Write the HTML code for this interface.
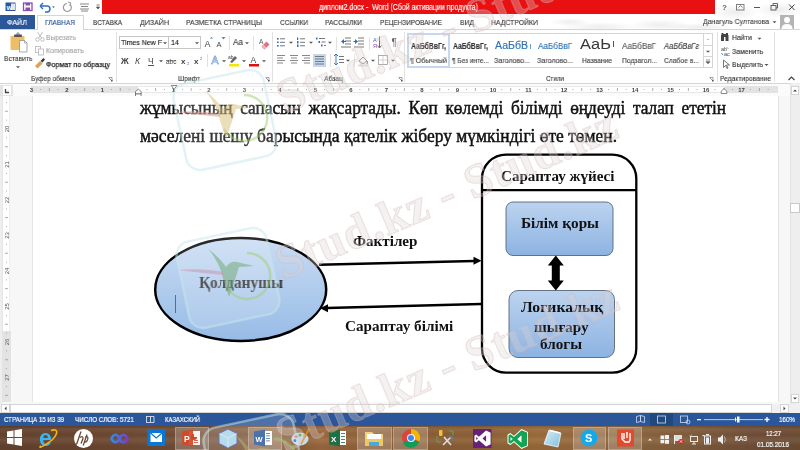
<!DOCTYPE html>
<html><head><meta charset="utf-8">
<style>
*{margin:0;padding:0;box-sizing:border-box}
html,body{width:800px;height:450px;overflow:hidden;background:#fff;font-family:"Liberation Sans",sans-serif;color:#444;position:relative}
.a{position:absolute;white-space:nowrap;will-change:transform}
.sep{position:absolute;width:1px;background:#E1E1E1}
.serif{font-family:"Liberation Serif",serif}
svg{position:absolute;overflow:visible}
</style></head><body>
<div class="a" style="left:102px;top:0;width:613px;height:14px;background:#E81010"></div>
<svg style="left:0;top:0" width="102" height="14">
<rect x="5.5" y="2.5" width="10" height="8.5" fill="#2B579A"/><rect x="11" y="3.5" width="4" height="6.5" fill="#fff" opacity=".85"/>
<text x="6.5" y="9.5" font-size="6" font-family="Liberation Sans" font-weight="bold" fill="#fff">W</text>
<rect x="23.5" y="3" width="8.5" height="7.5" fill="none" stroke="#8A4DAF" stroke-width="1.3"/><rect x="25.5" y="3" width="4.5" height="2.5" fill="#8A4DAF"/><rect x="25.5" y="7.5" width="4.5" height="3" fill="#8A4DAF"/>
<path d="M41 6 h6 a3 3 0 0 1 0 6 h-2" fill="none" stroke="#2B6CC4" stroke-width="1.4"/><path d="M40 6 l3 -3 M40 6 l3 3" stroke="#2B6CC4" stroke-width="1.4" fill="none"/>
<path d="M52 6.5 l1.5 1.5 l1.5 -1.5z" fill="#555"/>
<path d="M70 4.5 a4 4 0 1 1 -3 -1" fill="none" stroke="#999" stroke-width="1.2"/><path d="M68 2 l3 1 l-1.5 2.5" fill="none" stroke="#999" stroke-width="1"/>
<path d="M80 4h9M81 6.5h7M80 9h9M81 11h7" stroke="#777" stroke-width="0.9"/>
<path d="M96.5 5h3M96.5 7l1.5 2l1.5 -2z" stroke="#555" stroke-width="0.8" fill="#555"/>
</svg>
<svg style="left:714px;top:0" width="86" height="14">
<text x="8" y="10" font-size="8" font-family="Liberation Sans" font-weight="bold" fill="#666">?</text>
<rect x="22.5" y="4.5" width="7.5" height="5.5" fill="none" stroke="#777" stroke-width="0.9"/><path d="M24.5 7.5l2 -2l2 2" fill="none" stroke="#777" stroke-width="0.9"/>
<path d="M40 7.5h6" stroke="#555" stroke-width="1"/>
<rect x="57" y="5.5" width="5" height="4.5" fill="none" stroke="#555" stroke-width="0.9"/><path d="M59 5.5v-2h4.5v4.5h-1.5" fill="none" stroke="#555" stroke-width="0.9"/>
<path d="M75 4.5l5.5 5.5M80.5 4.5l-5.5 5.5" stroke="#444" stroke-width="1"/>
</svg>
<svg style="left:0;top:0" width="800" height="30"><defs><radialGradient id="cl"><stop offset="0" stop-color="#000" stop-opacity="0.07"/><stop offset="1" stop-color="#000" stop-opacity="0"/></radialGradient></defs><ellipse cx="600" cy="27" rx="40" ry="5" fill="url(#cl)"/><ellipse cx="660" cy="25" rx="30" ry="6" fill="url(#cl)"/><ellipse cx="700" cy="27" rx="35" ry="4" fill="url(#cl)"/><ellipse cx="735" cy="12" rx="25" ry="8" fill="url(#cl)"/><ellipse cx="780" cy="10" rx="25" ry="8" fill="url(#cl)"/><ellipse cx="570" cy="22" rx="20" ry="4" fill="url(#cl)"/></svg>
<div class="a" style="left:0;top:15px;width:35px;height:14px;background:#2B579A"></div>
<div class="a" style="left:37px;top:15px;width:47px;height:15px;border:1px solid #D5D5D5;border-bottom:none;background:#fff"></div>
<div class="a" style="left:0;top:29px;width:37px;height:1px;background:#D5D5D5"></div>
<div class="a" style="left:84px;top:29px;width:716px;height:1px;background:#D5D5D5"></div>
<svg style="left:770px;top:15px" width="30" height="15"><path d="M2.5 6.2l2 2l2 -2z" fill="#555"/><rect x="10" y="0" width="14" height="14" fill="#B4B4B4"/><circle cx="17" cy="5" r="3" fill="#fff"/><path d="M11.5 14 q0 -5 5.5 -5 q5.5 0 5.5 5z" fill="#fff"/></svg>
<div class="a" style="left:0;top:83px;width:800px;height:1px;background:#D5D5D5"></div>
<div class="sep" style="left:116px;top:32px;height:50px"></div>
<div class="sep" style="left:272px;top:32px;height:50px"></div>
<div class="sep" style="left:404px;top:32px;height:50px"></div>
<div class="sep" style="left:717px;top:32px;height:50px"></div>
<div class="sep" style="left:774px;top:32px;height:50px"></div>
<svg style="left:108px;top:77px" width="5" height="5"><path d="M0.5 0.5h3.5v3.5" fill="none" stroke="#888" stroke-width="0.8"/><path d="M1 1l3 3" stroke="#888" stroke-width="0.8"/><rect x="3" y="3" width="1.5" height="1.5" fill="#555"/></svg>
<svg style="left:265px;top:77px" width="5" height="5"><path d="M0.5 0.5h3.5v3.5" fill="none" stroke="#888" stroke-width="0.8"/><path d="M1 1l3 3" stroke="#888" stroke-width="0.8"/><rect x="3" y="3" width="1.5" height="1.5" fill="#555"/></svg>
<svg style="left:398px;top:77px" width="5" height="5"><path d="M0.5 0.5h3.5v3.5" fill="none" stroke="#888" stroke-width="0.8"/><path d="M1 1l3 3" stroke="#888" stroke-width="0.8"/><rect x="3" y="3" width="1.5" height="1.5" fill="#555"/></svg>
<svg style="left:709px;top:77px" width="5" height="5"><path d="M0.5 0.5h3.5v3.5" fill="none" stroke="#888" stroke-width="0.8"/><path d="M1 1l3 3" stroke="#888" stroke-width="0.8"/><rect x="3" y="3" width="1.5" height="1.5" fill="#555"/></svg>
<svg style="left:787px;top:75px" width="10" height="7"><path d="M1.5 5l3 -3l3 3" fill="none" stroke="#444" stroke-width="1.2"/></svg>
<svg style="left:0;top:30px" width="116" height="52">
<rect x="10.5" y="6" width="14" height="14" rx="0.8" fill="#EDBE68"/><rect x="14" y="4.5" width="8" height="2.5" rx="0.8" fill="#555"/><circle cx="18" cy="4" r="1.2" fill="none" stroke="#555" stroke-width="0.7"/>
<path d="M19.5 10.5h5l2.5 2.5v9h-7.5z" fill="#fff" stroke="#888" stroke-width="0.7"/><path d="M24.5 10.5v2.5h2.5" fill="none" stroke="#888" stroke-width="0.6"/>
<path d="M16 36.2l2 2l2 -2z" fill="#555"/>
<circle cx="37.5" cy="9.5" r="1.8" fill="none" stroke="#B0B0B0" stroke-width="0.8"/><circle cx="42.5" cy="9.5" r="1.8" fill="none" stroke="#B0B0B0" stroke-width="0.8"/><path d="M38.5 8l4-6M41.5 8l-4 -6" stroke="#B0B0B0" stroke-width="0.8"/>
<rect x="35.5" y="16.5" width="5" height="6" fill="#fff" stroke="#B5B5B5" stroke-width="0.8"/><rect x="38.5" y="19" width="5" height="6" fill="#fff" stroke="#B5B5B5" stroke-width="0.8"/>
<path d="M35 36l5 -5l2.5 2.5l-5 5z" fill="#E0A050"/><path d="M40.5 31l3 -3l1.5 1.5l-2.5 3z" fill="#333"/>
</svg>
<div class="a" style="left:119px;top:36px;width:50px;height:13px;border:1px solid #C6C6C6;background:#fff"></div>
<div class="a" style="left:168px;top:36px;width:33px;height:13px;border:1px solid #C6C6C6;background:#fff"></div>
<svg style="left:117px;top:30px" width="155" height="52">
<path d="M46 12.2l2 2l2 -2z" fill="#555"/><path d="M78 12.2l2 2l2 -2z" fill="#555"/>
<text x="87.5" y="17" font-size="9" font-family="Liberation Sans" fill="#444">A</text><path d="M93 8.5l1.5 -1.5l1.5 1.5z" fill="#2B6CC4"/>
<text x="99.5" y="17" font-size="7.5" font-family="Liberation Sans" fill="#444">A</text><path d="M104.5 7.2l2 2l2 -2z" fill="#2B6CC4"/>
<rect x="112" y="6" width="1" height="14" fill="#E1E1E1"/>
<path d="M128 12.2l2 2l2 -2z" fill="#555"/>
<rect x="136" y="6" width="1" height="14" fill="#E1E1E1"/>
<text x="142" y="13.5" font-size="6.5" font-family="Liberation Sans" fill="#555">A</text><path d="M144.5 16.5l5 -5l3 3l-5 5z" fill="#E07080"/><path d="M144.5 16.5l2 -2l3 3l-2 2z" fill="#F0B0B8"/>
<text x="4" y="34" font-size="8.5" font-family="Liberation Sans" font-weight="bold" fill="#444">Ж</text>
<text x="18" y="34" font-size="8.5" font-family="Liberation Sans" font-style="italic" fill="#444">К</text>
<text x="31" y="33.5" font-size="8.5" font-family="Liberation Sans" fill="#444">Ч</text><rect x="31" y="35" width="6" height="0.9" fill="#444"/>
<path d="M42 30.2l2 2l2 -2z" fill="#555"/>
<text x="49" y="33.5" font-size="6.5" font-family="Liberation Sans" fill="#444">abc</text><rect x="49" y="30.5" width="10" height="0.6" fill="#444"/>
<text x="64" y="34" font-size="8" font-family="Liberation Sans" font-weight="bold" fill="#444">x</text><text x="70" y="35" font-size="4" font-family="Liberation Sans" fill="#2B6CC4">2</text>
<text x="77" y="34" font-size="8" font-family="Liberation Sans" font-weight="bold" fill="#444">x</text><text x="83" y="30" font-size="4" font-family="Liberation Sans" fill="#2B6CC4">2</text>
<rect x="90" y="24" width="1" height="13" fill="#E1E1E1"/>
<text x="94.5" y="34" font-size="10.5" font-family="Liberation Sans" fill="#fff" stroke="#4A86D0" stroke-width="0.55">A</text>
<path d="M105 30.2l2 2l2 -2z" fill="#555"/>
<path d="M113 32l5 -6l2 2l-5 5z" fill="#666"/><text x="111" y="29" font-size="5" font-family="Liberation Sans" fill="#444">ab</text><rect x="112" y="34" width="10" height="2.5" fill="#F5E800"/>
<path d="M125 30.2l2 2l2 -2z" fill="#555"/>
<text x="133.5" y="32.5" font-size="8.5" font-family="Liberation Sans" fill="#444">A</text><rect x="132" y="34" width="10" height="2.5" fill="#E01010"/>
<path d="M145 30.2l2 2l2 -2z" fill="#555"/>
</svg>
<svg style="left:272px;top:30px" width="132" height="52">
<g fill="#2B6CC4"><rect x="5" y="8" width="1.6" height="1.6"/><rect x="5" y="11.5" width="1.6" height="1.6"/><rect x="5" y="15" width="1.6" height="1.6"/></g>
<g fill="#777"><rect x="8" y="8.3" width="5" height="1"/><rect x="8" y="11.8" width="5" height="1"/><rect x="8" y="15.3" width="5" height="1"/></g>
<path d="M17 11.7l2 2l2 -2z" fill="#555"/>
<g fill="#2B6CC4"><rect x="25" y="7.5" width="1.2" height="2.5"/><rect x="25" y="11" width="1.5" height="2.5"/><rect x="25" y="14.5" width="1.5" height="2.5"/></g>
<g fill="#777"><rect x="28" y="8.3" width="5" height="1"/><rect x="28" y="11.8" width="5" height="1"/><rect x="28" y="15.3" width="5" height="1"/></g>
<path d="M37 11.7l2 2l2 -2z" fill="#555"/>
<g fill="#2B6CC4"><rect x="44" y="7.5" width="1.5" height="2"/><rect x="46.5" y="11" width="1.5" height="2"/><rect x="49" y="14.5" width="1.5" height="2"/></g>
<g fill="#777"><rect x="47" y="8" width="6" height="1"/><rect x="49.5" y="11.5" width="4" height="1"/><rect x="52" y="15" width="2" height="1"/></g>
<path d="M56 11.7l2 2l2 -2z" fill="#555"/>
<rect x="64" y="7" width="1" height="13" fill="#E1E1E1"/>
<g fill="#777"><rect x="73" y="7.5" width="6" height="1"/><rect x="73" y="10.5" width="6" height="1"/><rect x="73" y="13.5" width="6" height="1"/><rect x="69" y="16.5" width="10" height="1"/></g><path d="M69 11.5l3 -2.5v5z" fill="#2B6CC4"/><rect x="71" y="11" width="3" height="1" fill="#2B6CC4"/>
<g fill="#777"><rect x="86" y="7.5" width="6" height="1"/><rect x="86" y="10.5" width="6" height="1"/><rect x="86" y="13.5" width="6" height="1"/><rect x="82" y="16.5" width="10" height="1"/></g><path d="M86 11.5l-3 -2.5v5z" fill="#2B6CC4"/><rect x="81.5" y="11" width="3" height="1" fill="#2B6CC4"/>
<rect x="97" y="7" width="1" height="13" fill="#E1E1E1"/>
<text x="101" y="12" font-size="5.5" font-family="Liberation Sans" fill="#2B6CC4">A</text><text x="101" y="17.5" font-size="5.5" font-family="Liberation Sans" fill="#8A3FB0">Я</text><path d="M107.5 6.5v11M105.5 15.5l2 2.5l2 -2.5" fill="none" stroke="#555" stroke-width="0.9"/>
<text x="119.5" y="16" font-size="10" font-family="Liberation Sans" fill="#666">¶</text>
<g fill="#888"><rect x="5" y="25" width="8" height="1"/><rect x="5" y="27.5" width="6" height="1"/><rect x="5" y="30" width="8" height="1"/><rect x="5" y="32.5" width="6" height="1"/></g>
<g fill="#888"><rect x="18" y="25" width="8" height="1"/><rect x="19" y="27.5" width="6" height="1"/><rect x="18" y="30" width="8" height="1"/><rect x="19" y="32.5" width="6" height="1"/></g>
<g fill="#888"><rect x="30" y="25" width="8" height="1"/><rect x="32" y="27.5" width="6" height="1"/><rect x="30" y="30" width="8" height="1"/><rect x="32" y="32.5" width="6" height="1"/></g>
<rect x="41" y="24" width="13" height="13" fill="#C5D7EE"/>
<g fill="#777"><rect x="43" y="26" width="9" height="1"/><rect x="43" y="28.5" width="9" height="1"/><rect x="43" y="31" width="9" height="1"/><rect x="43" y="33.5" width="9" height="1"/></g>
<rect x="58" y="24" width="1" height="13" fill="#E1E1E1"/>
<path d="M64 24v11M62 26l2 -2l2 2M62 33l2 2l2 -2" fill="none" stroke="#2B6CC4" stroke-width="0.9"/><g fill="#777"><rect x="67" y="26" width="5" height="1"/><rect x="67" y="29" width="5" height="1"/><rect x="67" y="32" width="5" height="1"/></g>
<path d="M74 29.7l2 2l2 -2z" fill="#555"/>
<rect x="82" y="24" width="1" height="13" fill="#E1E1E1"/>
<path d="M87 31l4 -4l4 4l-4 3z" fill="none" stroke="#777" stroke-width="0.9"/><path d="M95 31q1 2 0 3" stroke="#2B6CC4" fill="none"/><rect x="86" y="34.5" width="10" height="2" fill="#ddd"/>
<path d="M99 29.7l2 2l2 -2z" fill="#555"/>
<rect x="106.5" y="25.5" width="9" height="9" fill="none" stroke="#999" stroke-width="0.8"/><path d="M111 25.5v9M106.5 30h9" stroke="#bbb" stroke-width="0.6"/>
<path d="M119 29.7l2 2l2 -2z" fill="#555"/>
</svg>
<div class="a" style="left:407px;top:33px;width:306px;height:35px;border:1px solid #D5D5D5;background:#fff"></div>
<div class="a" style="left:407px;top:33px;width:43px;height:35px;border:2px solid #C6D8EF"></div>
<div class="a" style="left:703px;top:33px;width:10px;height:35px;border-left:1px solid #D5D5D5"></div>
<div class="a" style="left:703px;top:45px;width:10px;height:1px;background:#D5D5D5"></div>
<div class="a" style="left:703px;top:56px;width:10px;height:1px;background:#D5D5D5"></div>
<svg style="left:703px;top:33px" width="10" height="35"><path d="M3.5 7l1.5 -1.5l1.5 1.5z" fill="#bbb"/><path d="M3 17.7l2 2l2 -2z" fill="#555"/><path d="M3 27h4M3 28.7l2 2l2 -2z" stroke="#555" stroke-width="0.6" fill="#555"/></svg>
<div class="a" style="left:529.5px;top:44px;width:1px;height:5px;background:#6a9fd0"></div>
<div class="a" style="left:613px;top:41px;width:1px;height:6px;background:#555"></div>
<svg style="left:717px;top:30px" width="57" height="52">
<g fill="#444"><rect x="4" y="5" width="3" height="6"/><rect x="8.5" y="5" width="3" height="6"/><rect x="6" y="4" width="3.5" height="3"/><rect x="4.5" y="3" width="2" height="2"/><rect x="9" y="3" width="2" height="2"/></g>
<path d="M40.5 7.7l2 2l2 -2z" fill="#555"/>
<text x="4" y="21" font-size="5.5" font-family="Liberation Sans" fill="#444">ab</text><text x="7" y="25.5" font-size="5.5" font-family="Liberation Sans" fill="#444">ac</text><path d="M4.5 23l1.5 2" stroke="#2B6CC4" stroke-width="0.8"/><path d="M9.5 17l2 2" stroke="#999" stroke-width="0.8"/>
<path d="M6.5 30v7.5l2 -2l1.5 3l1 -0.5l-1.5 -3h3z" fill="#fff" stroke="#555" stroke-width="0.8"/>
<path d="M47.5 34l2 2l2 -2z" fill="#555"/>
</svg>
<div class="a" style="left:0;top:84px;width:800px;height:12px;background:#FBFBFB"></div>
<div class="a" style="left:0;top:85px;width:13px;height:11px;background:#E3E3E3"></div>
<div class="a" style="left:3px;top:86px;width:8px;height:9px;background:#fff"></div>
<svg style="left:3px;top:86px" width="8" height="9"><path d="M2.5 3v3.5h3.5" fill="none" stroke="#444" stroke-width="1.3"/></svg>
<div class="a" style="left:31px;top:86px;width:747px;height:7px;background:#fff;border-top:1px solid #E8E8E8;border-bottom:1px solid #E8E8E8"></div>
<div class="a" style="left:31px;top:86px;width:107px;height:7px;background:#E3E3E3"></div>
<div class="a" style="left:724px;top:86px;width:54px;height:7px;background:#E3E3E3"></div>
<svg style="left:0;top:83px" width="800" height="13"><text x="31.5" y="8.8" font-size="6" font-family="Liberation Sans" font-weight="bold" fill="#444" text-anchor="middle">3</text><rect x="40.0" y="6" width="0.8" height="1" fill="#999"/><rect x="48.9" y="5" width="0.8" height="3" fill="#999"/><rect x="57.7" y="6" width="0.8" height="1" fill="#999"/><text x="67.0" y="8.8" font-size="6" font-family="Liberation Sans" font-weight="bold" fill="#444" text-anchor="middle">2</text><rect x="75.5" y="6" width="0.8" height="1" fill="#999"/><rect x="84.3" y="5" width="0.8" height="3" fill="#999"/><rect x="93.2" y="6" width="0.8" height="1" fill="#999"/><text x="102.5" y="8.8" font-size="6" font-family="Liberation Sans" font-weight="bold" fill="#444" text-anchor="middle">1</text><rect x="111.0" y="6" width="0.8" height="1" fill="#999"/><rect x="119.8" y="5" width="0.8" height="3" fill="#999"/><rect x="128.7" y="6" width="0.8" height="1" fill="#999"/><rect x="146.5" y="6" width="0.8" height="1" fill="#999"/><rect x="155.3" y="5" width="0.8" height="3" fill="#999"/><rect x="164.2" y="6" width="0.8" height="1" fill="#999"/><text x="173.5" y="8.8" font-size="6" font-family="Liberation Sans" font-weight="bold" fill="#444" text-anchor="middle">1</text><rect x="182.0" y="6" width="0.8" height="1" fill="#999"/><rect x="190.8" y="5" width="0.8" height="3" fill="#999"/><rect x="199.7" y="6" width="0.8" height="1" fill="#999"/><text x="209.0" y="8.8" font-size="6" font-family="Liberation Sans" font-weight="bold" fill="#444" text-anchor="middle">2</text><rect x="217.5" y="6" width="0.8" height="1" fill="#999"/><rect x="226.3" y="5" width="0.8" height="3" fill="#999"/><rect x="235.2" y="6" width="0.8" height="1" fill="#999"/><text x="244.5" y="8.8" font-size="6" font-family="Liberation Sans" font-weight="bold" fill="#444" text-anchor="middle">3</text><rect x="253.0" y="6" width="0.8" height="1" fill="#999"/><rect x="261.9" y="5" width="0.8" height="3" fill="#999"/><rect x="270.7" y="6" width="0.8" height="1" fill="#999"/><text x="280.0" y="8.8" font-size="6" font-family="Liberation Sans" font-weight="bold" fill="#444" text-anchor="middle">4</text><rect x="288.5" y="6" width="0.8" height="1" fill="#999"/><rect x="297.4" y="5" width="0.8" height="3" fill="#999"/><rect x="306.2" y="6" width="0.8" height="1" fill="#999"/><text x="315.5" y="8.8" font-size="6" font-family="Liberation Sans" font-weight="bold" fill="#444" text-anchor="middle">5</text><rect x="324.0" y="6" width="0.8" height="1" fill="#999"/><rect x="332.9" y="5" width="0.8" height="3" fill="#999"/><rect x="341.7" y="6" width="0.8" height="1" fill="#999"/><text x="351.0" y="8.8" font-size="6" font-family="Liberation Sans" font-weight="bold" fill="#444" text-anchor="middle">6</text><rect x="359.5" y="6" width="0.8" height="1" fill="#999"/><rect x="368.4" y="5" width="0.8" height="3" fill="#999"/><rect x="377.2" y="6" width="0.8" height="1" fill="#999"/><text x="386.5" y="8.8" font-size="6" font-family="Liberation Sans" font-weight="bold" fill="#444" text-anchor="middle">7</text><rect x="395.0" y="6" width="0.8" height="1" fill="#999"/><rect x="403.9" y="5" width="0.8" height="3" fill="#999"/><rect x="412.7" y="6" width="0.8" height="1" fill="#999"/><text x="422.0" y="8.8" font-size="6" font-family="Liberation Sans" font-weight="bold" fill="#444" text-anchor="middle">8</text><rect x="430.5" y="6" width="0.8" height="1" fill="#999"/><rect x="439.4" y="5" width="0.8" height="3" fill="#999"/><rect x="448.2" y="6" width="0.8" height="1" fill="#999"/><text x="457.5" y="8.8" font-size="6" font-family="Liberation Sans" font-weight="bold" fill="#444" text-anchor="middle">9</text><rect x="466.0" y="6" width="0.8" height="1" fill="#999"/><rect x="474.9" y="5" width="0.8" height="3" fill="#999"/><rect x="483.7" y="6" width="0.8" height="1" fill="#999"/><text x="493.0" y="8.8" font-size="6" font-family="Liberation Sans" font-weight="bold" fill="#444" text-anchor="middle">10</text><rect x="501.5" y="6" width="0.8" height="1" fill="#999"/><rect x="510.4" y="5" width="0.8" height="3" fill="#999"/><rect x="519.2" y="6" width="0.8" height="1" fill="#999"/><text x="528.5" y="8.8" font-size="6" font-family="Liberation Sans" font-weight="bold" fill="#444" text-anchor="middle">11</text><rect x="537.0" y="6" width="0.8" height="1" fill="#999"/><rect x="545.9" y="5" width="0.8" height="3" fill="#999"/><rect x="554.7" y="6" width="0.8" height="1" fill="#999"/><text x="564.0" y="8.8" font-size="6" font-family="Liberation Sans" font-weight="bold" fill="#444" text-anchor="middle">12</text><rect x="572.5" y="6" width="0.8" height="1" fill="#999"/><rect x="581.4" y="5" width="0.8" height="3" fill="#999"/><rect x="590.2" y="6" width="0.8" height="1" fill="#999"/><text x="599.5" y="8.8" font-size="6" font-family="Liberation Sans" font-weight="bold" fill="#444" text-anchor="middle">13</text><rect x="608.0" y="6" width="0.8" height="1" fill="#999"/><rect x="616.9" y="5" width="0.8" height="3" fill="#999"/><rect x="625.7" y="6" width="0.8" height="1" fill="#999"/><text x="635.0" y="8.8" font-size="6" font-family="Liberation Sans" font-weight="bold" fill="#444" text-anchor="middle">14</text><rect x="643.5" y="6" width="0.8" height="1" fill="#999"/><rect x="652.4" y="5" width="0.8" height="3" fill="#999"/><rect x="661.2" y="6" width="0.8" height="1" fill="#999"/><text x="670.5" y="8.8" font-size="6" font-family="Liberation Sans" font-weight="bold" fill="#444" text-anchor="middle">15</text><rect x="679.0" y="6" width="0.8" height="1" fill="#999"/><rect x="687.9" y="5" width="0.8" height="3" fill="#999"/><rect x="696.7" y="6" width="0.8" height="1" fill="#999"/><text x="706.0" y="8.8" font-size="6" font-family="Liberation Sans" font-weight="bold" fill="#444" text-anchor="middle">16</text><rect x="714.5" y="6" width="0.8" height="1" fill="#999"/><rect x="723.4" y="5" width="0.8" height="3" fill="#999"/><rect x="732.2" y="6" width="0.8" height="1" fill="#999"/><text x="741.5" y="8.8" font-size="6" font-family="Liberation Sans" font-weight="bold" fill="#444" text-anchor="middle">17</text><rect x="750.0" y="6" width="0.8" height="1" fill="#999"/><rect x="758.9" y="5" width="0.8" height="3" fill="#999"/><rect x="767.7" y="6" width="0.8" height="1" fill="#999"/><path d="M135.5 11v-2.5l2.8 -2.3l2.8 2.3v2.5z" fill="#fff" stroke="#555" stroke-width="0.7"/><rect x="135.5" y="11" width="5.6" height="3.7" fill="#fff" stroke="#555" stroke-width="0.7"/><path d="M171.3 2.5h5.6l-2.8 4z" fill="#fff" stroke="#555" stroke-width="0.7"/><rect x="173.6" y="6.5" width="1" height="2.5" fill="#555"/><path d="M721.2 10.5v-2.3l2.8 -2.6l2.8 2.6v2.3z" fill="#fff" stroke="#555" stroke-width="0.7"/></svg>
<div class="a" style="left:790px;top:83px;width:10px;height:321px;background:#F0F0F0;border-left:1px solid #E3E3E3"></div>
<div class="a" style="left:791px;top:86px;width:8px;height:9px;background:#fff;border:1px solid #D5D5D5"></div>
<svg style="left:791px;top:86px" width="8" height="9"><path d="M2 5.5l2 -2l2 2z" fill="#444"/></svg>
<div class="a" style="left:791px;top:394px;width:8px;height:9px;background:#fff;border:1px solid #D5D5D5"></div>
<svg style="left:791px;top:394px" width="8" height="9"><path d="M2 3.5l2 2l2 -2z" fill="#444"/></svg>
<div class="a" style="left:0;top:96px;width:790px;height:308px;background:#F7F7F7"></div>
<div class="a" style="left:32px;top:96px;width:747px;height:306px;background:#fff;border-left:1px solid #E4E4E4;border-right:1px solid #E4E4E4"></div>
<div class="a" style="left:0;top:96px;width:3px;height:308px;background:#EEEEEE"></div>
<div class="a" style="left:2px;top:96px;width:8px;height:235px;background:#fff;border-left:1px solid #E6E6E6;border-right:1px solid #EDEDED"></div>
<div class="a" style="left:2px;top:331px;width:9px;height:71px;background:#E3E3E3"></div>
<svg style="left:0;top:96px" width="12" height="306"><text transform="translate(8.5,33.0) rotate(-90)" font-size="6" font-family="Liberation Sans" fill="#555" text-anchor="middle">20</text><text transform="translate(8.5,68.5) rotate(-90)" font-size="6" font-family="Liberation Sans" fill="#555" text-anchor="middle">21</text><text transform="translate(8.5,104.0) rotate(-90)" font-size="6" font-family="Liberation Sans" fill="#555" text-anchor="middle">22</text><text transform="translate(8.5,139.5) rotate(-90)" font-size="6" font-family="Liberation Sans" fill="#555" text-anchor="middle">23</text><text transform="translate(8.5,175.0) rotate(-90)" font-size="6" font-family="Liberation Sans" fill="#555" text-anchor="middle">24</text><text transform="translate(8.5,210.5) rotate(-90)" font-size="6" font-family="Liberation Sans" fill="#555" text-anchor="middle">25</text><text transform="translate(8.5,246.0) rotate(-90)" font-size="6" font-family="Liberation Sans" fill="#555" text-anchor="middle">26</text><text transform="translate(8.5,281.5) rotate(-90)" font-size="6" font-family="Liberation Sans" fill="#555" text-anchor="middle">27</text><rect x="6" y="6.0" width="1" height="0.8" fill="#999"/><rect x="5" y="14.8" width="3" height="0.8" fill="#999"/><rect x="6" y="23.7" width="1" height="0.8" fill="#999"/><rect x="6" y="41.5" width="1" height="0.8" fill="#999"/><rect x="5" y="50.4" width="3" height="0.8" fill="#999"/><rect x="6" y="59.2" width="1" height="0.8" fill="#999"/><rect x="6" y="77.0" width="1" height="0.8" fill="#999"/><rect x="5" y="85.8" width="3" height="0.8" fill="#999"/><rect x="6" y="94.7" width="1" height="0.8" fill="#999"/><rect x="6" y="112.5" width="1" height="0.8" fill="#999"/><rect x="5" y="121.3" width="3" height="0.8" fill="#999"/><rect x="6" y="130.2" width="1" height="0.8" fill="#999"/><rect x="6" y="148.0" width="1" height="0.8" fill="#999"/><rect x="5" y="156.8" width="3" height="0.8" fill="#999"/><rect x="6" y="165.7" width="1" height="0.8" fill="#999"/><rect x="6" y="183.5" width="1" height="0.8" fill="#999"/><rect x="5" y="192.3" width="3" height="0.8" fill="#999"/><rect x="6" y="201.2" width="1" height="0.8" fill="#999"/><rect x="6" y="219.0" width="1" height="0.8" fill="#999"/><rect x="5" y="227.8" width="3" height="0.8" fill="#999"/><rect x="6" y="236.7" width="1" height="0.8" fill="#999"/><rect x="6" y="254.5" width="1" height="0.8" fill="#999"/><rect x="5" y="263.4" width="3" height="0.8" fill="#999"/><rect x="6" y="272.2" width="1" height="0.8" fill="#999"/><rect x="6" y="290.0" width="1" height="0.8" fill="#999"/><rect x="5" y="298.9" width="3" height="0.8" fill="#999"/></svg>
<svg style="left:0;top:0" width="800" height="450">
<defs>
<linearGradient id="g1" x1="0" y1="0" x2="0" y2="1"><stop offset="0" stop-color="#C9DCF3"/><stop offset="1" stop-color="#97BBE6"/></linearGradient>
<linearGradient id="g2" x1="0" y1="0" x2="0" y2="1"><stop offset="0" stop-color="#BCD3EF"/><stop offset="1" stop-color="#8DB3E2"/></linearGradient>
</defs>
<ellipse cx="240.7" cy="289.4" rx="85.5" ry="51.5" fill="url(#g1)" stroke="#000" stroke-width="2.5"/>
<path d="M319 264.8 L474 261" stroke="#000" stroke-width="2.5"/><path d="M481.5 260.7 l-8 -4 v8z" fill="#000"/>
<path d="M481 304 L327 308" stroke="#000" stroke-width="2.5"/><path d="M320 308.2 l8 -4 v8z" fill="#000"/>
<rect x="482" y="154.6" width="154.3" height="218" rx="24" fill="#fff" stroke="#000" stroke-width="2.3"/>
<path d="M482 190.1 H636.3" stroke="#000" stroke-width="2.3"/>
<rect x="506" y="202" width="107" height="53.5" rx="7" fill="url(#g2)" stroke="#56657A" stroke-width="0.9"/>
<rect x="509" y="290.5" width="105.5" height="67" rx="9" fill="url(#g2)" stroke="#56657A" stroke-width="0.9"/>
<path d="M555.8 255.5 l8 10 h-4 v15 h4 l-8 10 l-8 -10 h4 v-15 h-4z" fill="#000"/>
<rect x="175" y="295" width="0.8" height="18" fill="#555"/>
</svg>
<div class="a" style="left:790px;top:96px;width:10px;height:308px;background:#EEEEEE;border-left:1px solid #E3E3E3"></div>
<div class="a" style="left:791px;top:394px;width:8px;height:9px;background:#fff;border:1px solid #D5D5D5"></div>
<svg style="left:791px;top:394px" width="8" height="9"><path d="M2 3.5l2 2l2 -2z" fill="#444"/></svg>
<div class="a" style="left:790px;top:203px;width:10px;height:10px;background:#fff;border:1px solid #C8C8C8"></div>
<div class="a" style="left:0;top:404px;width:800px;height:9px;background:#F0F0F0"></div>
<div class="a" style="left:1px;top:404px;width:9px;height:9px;background:#fff;border:1px solid #D5D5D5"></div>
<svg style="left:1px;top:404px" width="9" height="9"><path d="M5.5 2.5l-2 2l2 2z" fill="#444"/></svg>
<div class="a" style="left:10px;top:404px;width:762px;height:9px;background:#fff;border:1px solid #D5D5D5"></div>
<div class="a" style="left:780px;top:404px;width:9px;height:9px;background:#fff;border:1px solid #D5D5D5"></div>
<svg style="left:780px;top:404px" width="9" height="9"><path d="M3.5 2.5l2 2l-2 2z" fill="#444"/></svg>
<div class="a" style="left:0;top:413px;width:800px;height:13px;background:#2B579A"></div>
<div class="a" style="left:650px;top:413px;width:23px;height:13px;background:#21487F"></div>
<svg style="left:0;top:413px" width="800" height="13">
<g fill="none" stroke="#fff" stroke-width="0.8" opacity=".9"><rect x="146.5" y="3.5" width="4" height="6"/><path d="M150.5 3.5h3.5v6h-3.5"/></g>
<g fill="none" stroke="#CFDCEF" stroke-width="0.8"><path d="M636.5 3.5v6l4 -1v-6zM640.5 2.5v6l4 1v-6z"/><rect x="657.5" y="3" width="8" height="7"/><rect x="680.5" y="3" width="7" height="6.5"/><circle cx="688" cy="9" r="2"/></g>
<rect x="697" y="6" width="4" height="1.3" fill="#fff"/>
<rect x="704" y="6.2" width="59" height="0.9" fill="#CFDCEF"/><rect x="737" y="3.5" width="2.5" height="6" fill="#fff"/><rect x="735" y="4.5" width="1" height="4" fill="#fff"/>
<path d="M767 4v5M764.5 6.5h5" stroke="#fff" stroke-width="1.3"/>
</svg>
<div class="a" style="left:0;top:426px;width:800px;height:24px;background:linear-gradient(90deg,#654330 0%,#6C4830 12%,#74503A 25%,#8C6038 37%,#9C6A40 40%,#8A5E38 50%,#8E6238 60%,#9C6C3C 67%,#946A40 75%,#84603E 85%,#72503A 94%,#6E4E36 100%)"></div>
<div class="a" style="left:0;top:426px;width:800px;height:24px;background:linear-gradient(180deg,rgba(0,0,0,.12) 0,rgba(255,255,255,.05) 3px,rgba(0,0,0,.04) 9px,rgba(255,255,255,.06) 14px,rgba(0,0,0,.06) 20px)"></div>
<div class="a" style="left:175px;top:427px;width:34px;height:23px;background:rgba(255,255,255,.2);border:1px solid rgba(255,255,255,.25)"></div>
<div class="a" style="left:248px;top:427px;width:34px;height:23px;background:rgba(255,255,255,.2);border:1px solid rgba(255,255,255,.25)"></div>
<div class="a" style="left:357px;top:427px;width:35px;height:23px;background:rgba(255,255,255,.2);border:1px solid rgba(255,255,255,.25)"></div>
<div class="a" style="left:393px;top:427px;width:35px;height:23px;background:rgba(255,255,255,.2);border:1px solid rgba(255,255,255,.25)"></div>
<div class="a" style="left:573px;top:427px;width:33px;height:23px;background:rgba(255,255,255,.2);border:1px solid rgba(255,255,255,.25)"></div>
<div class="a" style="left:608px;top:427px;width:34px;height:23px;background:rgba(255,255,255,.2);border:1px solid rgba(255,255,255,.25)"></div>
<svg style="left:0;top:426px" width="800" height="24">
<g fill="#fff"><path d="M7 5.5l6.5 -1v6.5h-6.5z"/><path d="M14.5 4.3l7.5 -1.2v7.9h-7.5z"/><path d="M7 12h6.5v6.5l-6.5 -1z"/><path d="M14.5 12h7.5v7.9l-7.5 -1.2z"/></g>
<text x="39" y="20" font-size="23" font-weight="bold" font-family="Liberation Sans" fill="#3DB6EE">e</text>
<path d="M41 20 C37 23 45 20 52 14 C58 8 59 2 51 4.5" fill="none" stroke="#F2B21A" stroke-width="1.6"/>
<circle cx="83.5" cy="12.5" r="9.5" fill="#fff"/><path d="M81 5.5l-4.5 13M80 11.5q3 -2 3 1l-2 5M87 8.5l-3.8 11M85 11q4 -1.5 2.5 3q-1 2.5 -3 2" fill="none" stroke="#6B4A32" stroke-width="1.3"/>
<defs><linearGradient id="inf" x1="0" x2="1"><stop offset="0" stop-color="#2E8BE8"/><stop offset="1" stop-color="#7A3FD0"/></linearGradient></defs><path d="M111.5 12.5c2 -5 6 -5 8 0c2 5 6 5 8 0c-2 -5 -6 -5 -8 0c-2 5 -6 5 -8 0z" fill="none" stroke="url(#inf)" stroke-width="2.6"/>
<rect x="147.5" y="3" width="17.5" height="17" fill="#0A78D2"/><path d="M150.5 7h11.5v9h-11.5z" fill="#fff"/><path d="M150.5 7l5.75 5l5.75 -5" fill="none" stroke="#0A78D2" stroke-width="1.2"/>
<rect x="189" y="5" width="11" height="14" fill="#fff" opacity=".92"/><path d="M182 5.5l11 -2v17l-11 -2z" fill="#D24726" opacity=".9"/><text x="184" y="15.5" font-size="8.5" font-weight="bold" font-family="Liberation Sans" fill="#fff">P</text><path d="M194 8a3 3 0 1 0 3 3h-3z" fill="#D24726"/><g fill="#D24726"><rect x="194" y="14" width="4" height="0.8"/><rect x="194" y="16" width="4" height="0.8"/></g>
<path d="M228 3l9 4.5v10l-9 4.5l-9 -4.5v-10z" fill="#A9D6E8" stroke="#4F57A8" stroke-width="1"/><path d="M219 7.5l9 4.5l9 -4.5M228 12v10" fill="none" stroke="#fff" stroke-width="0.6" opacity=".7"/>
<rect x="262" y="5" width="10" height="14" fill="#fff"/><path d="M254 5.5l11 -2v17l-11 -2z" fill="#2B579A"/><text x="255.5" y="15.5" font-size="7.5" font-weight="bold" font-family="Liberation Sans" fill="#fff">W</text><g fill="#2B579A"><rect x="266" y="7" width="4" height="0.8"/><rect x="266" y="9.5" width="4" height="0.8"/><rect x="266" y="12" width="4" height="0.8"/><rect x="266" y="14.5" width="4" height="0.8"/></g>
<ellipse cx="300" cy="13" rx="8.5" ry="6.5" fill="#C8DDEC"/><circle cx="296" cy="10.5" r="1.5" fill="#E04040"/><circle cx="300" cy="9" r="1.5" fill="#40A040"/><circle cx="304" cy="10" r="1.5" fill="#E0B030"/><circle cx="295" cy="14.5" r="1.5" fill="#4060D0"/><path d="M309 3l-8 15" stroke="#E08A20" stroke-width="1.6"/>
<rect x="335" y="5" width="11" height="14" fill="#fff"/><path d="M329 5.5l11 -2v17l-11 -2z" fill="#1E7145"/><text x="331" y="15.5" font-size="8" font-weight="bold" font-family="Liberation Sans" fill="#fff">X</text><g fill="#1E7145"><rect x="341" y="7" width="4" height="0.8"/><rect x="341" y="10" width="4" height="0.8"/><rect x="341" y="13" width="4" height="0.8"/><rect x="341" y="16" width="4" height="0.8"/></g>
<path d="M365 6h7l2 2h9v12h-18z" fill="#F3D27A"/><rect x="367" y="8" width="14" height="6" fill="#fff"/><rect x="365" y="13" width="18" height="7" fill="#F1C65A"/><rect x="369" y="16" width="10" height="4" fill="#4AA8E0"/>
<circle cx="411" cy="12" r="9" fill="#DB4437"/><path d="M411 12 L419 16.5 A9 9 0 0 1 403 17z" fill="#0F9D58"/><path d="M411 12 L411 3 A9 9 0 0 1 419.5 15.5z" fill="#F4B400"/><circle cx="411" cy="12" r="4" fill="#fff"/><circle cx="411" cy="12" r="3" fill="#4285F4"/>
<rect x="439" y="4" width="3.5" height="6" rx="1" fill="#F2C230"/><path d="M437 10v6h4M449 5h4v4" fill="none" stroke="#5BA85B" stroke-width="1"/><path d="M443 19l8 -8M444 11l7 8" stroke="#ddd" stroke-width="1.6"/><path d="M450 10l3 3" stroke="#5B7FB0" stroke-width="2"/>
<rect x="473" y="3" width="18.5" height="19" fill="#68217A"/><path transform="translate(473.5,3.5) scale(0.9)" fill-rule="evenodd" fill="#fff" d="M14 1 L19 3.5 L19 16.5 L14 19 L6 12 L3 14.5 L1 13 L1 7 L3 5.5 L6 8 Z M3 8.3 L5 10 L3 11.7 Z M14 6.5 L10 10 L14 13.5 Z"/>
<path transform="translate(507.5,3) scale(1.0)" fill-rule="evenodd" fill="#fff" d="M14 0 L20.5 3 L20.5 17 L14 20 L6.5 13.2 L2.8 16 L0 14.2 L0 5.8 L2.8 4 L6.5 6.8 Z"/><path transform="translate(507.5,3) scale(1.0)" fill-rule="evenodd" fill="#12A550" d="M14 1.2 L19.5 3.6 L19.5 16.4 L14 18.8 L6.5 12 L3 14.8 L1 13.6 L1 6.4 L3 5.2 L6.5 8 Z M3 8 L5.2 10 L3 12 Z M14 6.2 L9.8 10 L14 13.8 Z"/>
<defs><linearGradient id="np" x1="0" y1="0" x2="1" y2="1"><stop offset="0" stop-color="#D8EEF8"/><stop offset="1" stop-color="#7FC0DE"/></linearGradient></defs><path d="M549 4l12 3l-3 14l-14 -3z" fill="url(#np)" stroke="#F2FAFD" stroke-width="0.8"/><path d="M550 4.5l10 2.5" stroke="#fff" stroke-width="1.5"/>
<circle cx="589" cy="12" r="8.5" fill="#16A9E8"/><text x="585" y="16" font-size="11" font-weight="bold" font-family="Liberation Sans" fill="#fff">S</text>
<rect x="617" y="3.5" width="17" height="17" fill="#E24A2D"/><path d="M622 7v6l3 3h4l1 -2v-7M624 7v6M627 6v6" fill="none" stroke="#fff" stroke-width="1.4"/>
<path d="M648 14.5l2 -2l2 2z" fill="#eee"/>
<g fill="#f2f2f2"><rect x="660.5" y="9.5" width="3.8" height="3.5"/><rect x="665" y="9" width="4" height="4"/><rect x="660.5" y="13.8" width="3.8" height="3.5"/><rect x="665" y="13.8" width="4" height="4"/></g>
<path d="M674.5 9v9" stroke="#eee" stroke-width="1"/><path d="M675 9h7v6h-7z" fill="#ddd"/><circle cx="681" cy="15.5" r="2.6" fill="#E02020"/><path d="M679.8 14.3l2.4 2.4M682.2 14.3l-2.4 2.4" stroke="#fff" stroke-width="0.8"/>
<rect x="690.5" y="10.5" width="7" height="5" fill="none" stroke="#e8e8e8" stroke-width="1"/><path d="M694 15.5v2.5M692 18h4" stroke="#e8e8e8" stroke-width="1"/><path d="M689.5 9l1 1M691.5 8.5v1" stroke="#ccc" stroke-width="0.7"/>
<rect x="704.5" y="10" width="6" height="8" fill="none" stroke="#eee" stroke-width="1"/><rect x="706" y="11.5" width="3" height="6" fill="#eee"/><rect x="702.5" y="9" width="2" height="1.2" fill="#eee"/><rect x="706" y="8" width="3" height="1.5" fill="#eee"/>
<path d="M718 11.5h2l3 -3v10l-3 -3h-2z" fill="#eee"/><path d="M724.5 10.5q1.5 3 0 6" fill="none" stroke="#ccc" stroke-width="0.8"/>
</svg>
<div class="a serif" style="left:140px;top:99.06px;width:586px;font-size:17.3px;line-height:17.3px;color:#111;text-align:justify;text-align-last:justify;white-space:normal;transform:scaleY(1.1);transform-origin:0 0;-webkit-text-stroke:0.45px #111">жұмысының сапасын жақсартады. Көп көлемді білімді өңдеуді талап ететін</div><div class="a" style="-webkit-text-stroke:0.15px currentColor;left:319.00px;top:3.38px;font-family:'Liberation Sans';font-size:9px;line-height:9px;color:#fff;font-weight:normal;font-style:normal;transform:scale(0.7725,1.000);transform-origin:0 0;">диплом2.docx -&nbsp; Word (Сбой активации продукта)</div>
<div class="a" style="-webkit-text-stroke:0.15px currentColor;left:7.00px;top:18.54px;font-family:'Liberation Sans';font-size:8.1px;line-height:8.1px;color:#fff;font-weight:normal;font-style:normal;transform:scale(0.8883,1.000);transform-origin:0 0;">ФАЙЛ</div>
<div class="a" style="-webkit-text-stroke:0.15px currentColor;left:45.00px;top:18.54px;font-family:'Liberation Sans';font-size:8.1px;line-height:8.1px;color:#2B579A;font-weight:normal;font-style:normal;transform:scale(0.8081,1.000);transform-origin:0 0;">ГЛАВНАЯ</div>
<div class="a" style="-webkit-text-stroke:0.15px currentColor;left:93.00px;top:18.54px;font-family:'Liberation Sans';font-size:8.1px;line-height:8.1px;color:#3a3a3a;font-weight:normal;font-style:normal;transform:scale(0.7990,1.000);transform-origin:0 0;">ВСТАВКА</div>
<div class="a" style="-webkit-text-stroke:0.15px currentColor;left:140.00px;top:18.54px;font-family:'Liberation Sans';font-size:8.1px;line-height:8.1px;color:#3a3a3a;font-weight:normal;font-style:normal;transform:scale(0.8722,1.000);transform-origin:0 0;">ДИЗАЙН</div>
<div class="a" style="-webkit-text-stroke:0.15px currentColor;left:186.00px;top:18.54px;font-family:'Liberation Sans';font-size:8.1px;line-height:8.1px;color:#3a3a3a;font-weight:normal;font-style:normal;transform:scale(0.8436,1.000);transform-origin:0 0;">РАЗМЕТКА СТРАНИЦЫ</div>
<div class="a" style="-webkit-text-stroke:0.15px currentColor;left:280.00px;top:18.54px;font-family:'Liberation Sans';font-size:8.1px;line-height:8.1px;color:#3a3a3a;font-weight:normal;font-style:normal;transform:scale(0.8068,1.000);transform-origin:0 0;">ССЫЛКИ</div>
<div class="a" style="-webkit-text-stroke:0.15px currentColor;left:325.00px;top:18.54px;font-family:'Liberation Sans';font-size:8.1px;line-height:8.1px;color:#3a3a3a;font-weight:normal;font-style:normal;transform:scale(0.8262,1.000);transform-origin:0 0;">РАССЫЛКИ</div>
<div class="a" style="-webkit-text-stroke:0.15px currentColor;left:380.00px;top:18.54px;font-family:'Liberation Sans';font-size:8.1px;line-height:8.1px;color:#3a3a3a;font-weight:normal;font-style:normal;transform:scale(0.7965,1.000);transform-origin:0 0;">РЕЦЕНЗИРОВАНИЕ</div>
<div class="a" style="-webkit-text-stroke:0.15px currentColor;left:460.00px;top:18.54px;font-family:'Liberation Sans';font-size:8.1px;line-height:8.1px;color:#3a3a3a;font-weight:normal;font-style:normal;transform:scale(0.8382,1.000);transform-origin:0 0;">ВИД</div>
<div class="a" style="-webkit-text-stroke:0.15px currentColor;left:491.00px;top:18.54px;font-family:'Liberation Sans';font-size:8.1px;line-height:8.1px;color:#3a3a3a;font-weight:normal;font-style:normal;transform:scale(0.8485,1.000);transform-origin:0 0;">НАДСТРОЙКИ</div>
<div class="a" style="-webkit-text-stroke:0.15px currentColor;left:703.00px;top:18.14px;font-family:'Liberation Sans';font-size:8.1px;line-height:8.1px;color:#444;font-weight:normal;font-style:normal;transform:scale(0.8549,1.000);transform-origin:0 0;">Данагуль Султанова</div>
<div class="a" style="-webkit-text-stroke:0.15px currentColor;left:31.00px;top:74.94px;font-family:'Liberation Sans';font-size:8.1px;line-height:8.1px;color:#3a3a3a;font-weight:normal;font-style:normal;transform:scale(0.8000,1.000);transform-origin:0 0;">Буфер обмена</div>
<div class="a" style="-webkit-text-stroke:0.15px currentColor;left:178.00px;top:74.94px;font-family:'Liberation Sans';font-size:8.1px;line-height:8.1px;color:#3a3a3a;font-weight:normal;font-style:normal;transform:scale(0.8258,1.000);transform-origin:0 0;">Шрифт</div>
<div class="a" style="-webkit-text-stroke:0.15px currentColor;left:324.00px;top:74.94px;font-family:'Liberation Sans';font-size:8.1px;line-height:8.1px;color:#3a3a3a;font-weight:normal;font-style:normal;transform:scale(0.8363,1.000);transform-origin:0 0;">Абзац</div>
<div class="a" style="-webkit-text-stroke:0.15px currentColor;left:546.00px;top:74.94px;font-family:'Liberation Sans';font-size:8.1px;line-height:8.1px;color:#3a3a3a;font-weight:normal;font-style:normal;transform:scale(0.7716,1.000);transform-origin:0 0;">Стили</div>
<div class="a" style="-webkit-text-stroke:0.15px currentColor;left:720.00px;top:74.94px;font-family:'Liberation Sans';font-size:8.1px;line-height:8.1px;color:#3a3a3a;font-weight:normal;font-style:normal;transform:scale(0.8272,1.000);transform-origin:0 0;">Редактирование</div>
<div class="a" style="-webkit-text-stroke:0.15px currentColor;left:3.50px;top:54.64px;font-family:'Liberation Sans';font-size:8.1px;line-height:8.1px;color:#3a3a3a;font-weight:normal;font-style:normal;transform:scale(0.8306,1.000);transform-origin:0 0;">Вставить</div>
<div class="a" style="-webkit-text-stroke:0.15px currentColor;left:46.00px;top:34.44px;font-family:'Liberation Sans';font-size:8.1px;line-height:8.1px;color:#A6A6A6;font-weight:normal;font-style:normal;transform:scale(0.8333,1.000);transform-origin:0 0;">Вырезать</div>
<div class="a" style="-webkit-text-stroke:0.15px currentColor;left:46.00px;top:47.14px;font-family:'Liberation Sans';font-size:8.1px;line-height:8.1px;color:#A6A6A6;font-weight:normal;font-style:normal;transform:scale(0.8717,1.000);transform-origin:0 0;">Копировать</div>
<div class="a" style="left:46.00px;top:61.14px;font-family:'Liberation Sans';font-size:8.1px;line-height:8.1px;color:#222;font-weight:normal;font-style:normal;transform:scale(0.8818,1.000);transform-origin:0 0;-webkit-text-stroke:0.25px #222">Формат по образцу</div>
<div class="a" style="-webkit-text-stroke:0.15px currentColor;left:121.00px;top:38.64px;font-family:'Liberation Sans';font-size:8.1px;line-height:8.1px;color:#222;font-weight:normal;font-style:normal;transform:scale(0.8654,1.000);transform-origin:0 0;">Times New F</div>
<div class="a" style="-webkit-text-stroke:0.15px currentColor;left:171.00px;top:38.64px;font-family:'Liberation Sans';font-size:8.1px;line-height:8.1px;color:#222;font-weight:normal;font-style:normal;transform:scale(0.8873,1.000);transform-origin:0 0;">14</div>
<div class="a" style="-webkit-text-stroke:0.15px currentColor;left:233.00px;top:38.38px;font-family:'Liberation Sans';font-size:9px;line-height:9px;color:#444;font-weight:normal;font-style:normal;transform:scale(0.9078,1.000);transform-origin:0 0;">Aa</div>
<div class="a" style="-webkit-text-stroke:0.15px currentColor;left:411.00px;top:41.92px;font-family:'Liberation Sans';font-size:8.6px;line-height:8.6px;color:#333;font-weight:bold;font-style:normal;transform:scale(0.7926,1.000);transform-origin:0 0;">АаБбВвГг,</div>
<div class="a" style="-webkit-text-stroke:0.15px currentColor;left:410.00px;top:56.64px;font-family:'Liberation Sans';font-size:8.1px;line-height:8.1px;color:#444;font-weight:normal;font-style:normal;transform:scale(0.8732,1.000);transform-origin:0 0;">¶ Обычный</div>
<div class="a" style="-webkit-text-stroke:0.15px currentColor;left:453.00px;top:41.92px;font-family:'Liberation Sans';font-size:8.6px;line-height:8.6px;color:#333;font-weight:bold;font-style:normal;transform:scale(0.7926,1.000);transform-origin:0 0;">АаБбВвГг,</div>
<div class="a" style="-webkit-text-stroke:0.15px currentColor;left:452.00px;top:56.64px;font-family:'Liberation Sans';font-size:8.1px;line-height:8.1px;color:#444;font-weight:normal;font-style:normal;transform:scale(0.8035,1.000);transform-origin:0 0;">¶ Без инте...</div>
<div class="a" style="-webkit-text-stroke:0.15px currentColor;left:495.00px;top:40.83px;font-family:'Liberation Sans';font-size:10px;line-height:10px;color:#2E74B5;font-weight:normal;font-style:normal;transform:scale(1.0539,1.000);transform-origin:0 0;">АаБбВ</div>
<div class="a" style="-webkit-text-stroke:0.15px currentColor;left:494.00px;top:56.64px;font-family:'Liberation Sans';font-size:8.1px;line-height:8.1px;color:#444;font-weight:normal;font-style:normal;transform:scale(0.8724,1.000);transform-origin:0 0;">Заголово...</div>
<div class="a" style="-webkit-text-stroke:0.15px currentColor;left:538.00px;top:41.88px;font-family:'Liberation Sans';font-size:9px;line-height:9px;color:#2E74B5;font-weight:normal;font-style:normal;transform:scale(0.8988,1.000);transform-origin:0 0;">АаБбВвГ</div>
<div class="a" style="-webkit-text-stroke:0.15px currentColor;left:537.00px;top:56.64px;font-family:'Liberation Sans';font-size:8.1px;line-height:8.1px;color:#444;font-weight:normal;font-style:normal;transform:scale(0.8724,1.000);transform-origin:0 0;">Заголово...</div>
<div class="a" style="left:580.00px;top:36.18px;font-family:'Liberation Sans';font-size:15.5px;line-height:15.5px;color:#383838;font-weight:normal;font-style:normal;transform:scale(1.0576,1.000);transform-origin:0 0;-webkit-text-stroke:0">АаЬ</div>
<div class="a" style="-webkit-text-stroke:0.15px currentColor;left:582.00px;top:56.64px;font-family:'Liberation Sans';font-size:8.1px;line-height:8.1px;color:#444;font-weight:normal;font-style:normal;transform:scale(0.8294,1.000);transform-origin:0 0;">Название</div>
<div class="a" style="-webkit-text-stroke:0.15px currentColor;left:622.00px;top:42.30px;font-family:'Liberation Sans';font-size:8.5px;line-height:8.5px;color:#5A5A5A;font-weight:normal;font-style:normal;transform:scale(0.9515,1.000);transform-origin:0 0;">АаБбВвГ</div>
<div class="a" style="-webkit-text-stroke:0.15px currentColor;left:622.00px;top:56.64px;font-family:'Liberation Sans';font-size:8.1px;line-height:8.1px;color:#444;font-weight:normal;font-style:normal;transform:scale(0.8402,1.000);transform-origin:0 0;">Подзагол...</div>
<div class="a" style="-webkit-text-stroke:0.15px currentColor;left:664.00px;top:42.30px;font-family:'Liberation Sans';font-size:8.5px;line-height:8.5px;color:#404040;font-weight:normal;font-style:italic;transform:scale(0.8829,1.000);transform-origin:0 0;">АаБбВвГг</div>
<div class="a" style="-webkit-text-stroke:0.15px currentColor;left:664.00px;top:56.64px;font-family:'Liberation Sans';font-size:8.1px;line-height:8.1px;color:#444;font-weight:normal;font-style:normal;transform:scale(0.8330,1.000);transform-origin:0 0;">Слабое в...</div>
<div class="a" style="-webkit-text-stroke:0.15px currentColor;left:732.00px;top:34.44px;font-family:'Liberation Sans';font-size:8.1px;line-height:8.1px;color:#333;font-weight:normal;font-style:normal;transform:scale(0.8654,1.000);transform-origin:0 0;">Найти</div>
<div class="a" style="-webkit-text-stroke:0.15px currentColor;left:732.00px;top:47.94px;font-family:'Liberation Sans';font-size:8.1px;line-height:8.1px;color:#333;font-weight:normal;font-style:normal;transform:scale(0.8522,1.000);transform-origin:0 0;">Заменить</div>
<div class="a" style="-webkit-text-stroke:0.15px currentColor;left:732.00px;top:61.14px;font-family:'Liberation Sans';font-size:8.1px;line-height:8.1px;color:#333;font-weight:normal;font-style:normal;transform:scale(0.8301,1.000);transform-origin:0 0;">Выделить</div>
<div class="a" style="left:140.00px;top:127.06px;font-family:'Liberation Serif';font-size:17.3px;line-height:17.3px;color:#111;font-weight:normal;font-style:normal;transform:scale(1.0090,1.100);transform-origin:0 0;-webkit-text-stroke:0.45px #111">мәселені шешу барысында қателік жіберу мүмкіндігі өте төмен.</div>
<div class="a" style="left:199.00px;top:275.10px;font-family:'Liberation Serif';font-size:16px;line-height:16px;color:#333;font-weight:bold;font-style:normal;transform:scale(0.9579,1.000);transform-origin:0 0;">Қолданушы</div>
<div class="a" style="left:353.00px;top:233.86px;font-family:'Liberation Serif';font-size:14.5px;line-height:14.5px;color:#111;font-weight:bold;font-style:normal;transform:scale(1.0427,1.000);transform-origin:0 0;">Фактілер</div>
<div class="a" style="left:344.70px;top:318.86px;font-family:'Liberation Serif';font-size:14.5px;line-height:14.5px;color:#111;font-weight:bold;font-style:normal;transform:scale(1.0489,1.000);transform-origin:0 0;">Сараптау білімі</div>
<div class="a" style="left:501.00px;top:169.44px;font-family:'Liberation Serif';font-size:15px;line-height:15px;color:#111;font-weight:bold;font-style:normal;transform:scale(1.0057,1.000);transform-origin:0 0;">Сараптау жүйесі</div>
<div class="a" style="left:520.60px;top:216.44px;font-family:'Liberation Serif';font-size:15px;line-height:15px;color:#111;font-weight:bold;font-style:normal;transform:scale(1.0150,1.000);transform-origin:0 0;">Білім қоры</div>
<div class="a" style="left:520.60px;top:300.44px;font-family:'Liberation Serif';font-size:15px;line-height:15px;color:#111;font-weight:bold;font-style:normal;transform:scale(1.0486,1.000);transform-origin:0 0;">Логикалық</div>
<div class="a" style="left:534.00px;top:319.94px;font-family:'Liberation Serif';font-size:15px;line-height:15px;color:#111;font-weight:bold;font-style:normal;transform:scale(1.0029,1.000);transform-origin:0 0;">шығару</div>
<div class="a" style="left:540.00px;top:337.44px;font-family:'Liberation Serif';font-size:15px;line-height:15px;color:#111;font-weight:bold;font-style:normal;transform:scale(1.0101,1.000);transform-origin:0 0;">блогы</div>
<div class="a" style="left:4.00px;top:415.70px;font-family:'Liberation Sans';font-size:7.8px;line-height:7.8px;color:#fff;font-weight:normal;font-style:normal;transform:scale(0.7856,1.000);transform-origin:0 0;-webkit-text-stroke:0.2px #fff">СТРАНИЦА 15 ИЗ 39</div>
<div class="a" style="left:75.00px;top:415.70px;font-family:'Liberation Sans';font-size:7.8px;line-height:7.8px;color:#fff;font-weight:normal;font-style:normal;transform:scale(0.8087,1.000);transform-origin:0 0;-webkit-text-stroke:0.2px #fff">ЧИСЛО СЛОВ: 5721</div>
<div class="a" style="left:165.00px;top:415.70px;font-family:'Liberation Sans';font-size:7.8px;line-height:7.8px;color:#fff;font-weight:normal;font-style:normal;transform:scale(0.7627,1.000);transform-origin:0 0;-webkit-text-stroke:0.2px #fff">КАЗАХСКИЙ</div>
<div class="a" style="left:779.00px;top:415.70px;font-family:'Liberation Sans';font-size:7.8px;line-height:7.8px;color:#fff;font-weight:normal;font-style:normal;transform:scale(0.8019,1.000);transform-origin:0 0;-webkit-text-stroke:0.2px #fff">160%</div>
<div class="a" style="left:735.00px;top:435.23px;font-family:'Liberation Sans';font-size:8px;line-height:8px;color:#fff;font-weight:normal;font-style:normal;transform:scale(0.8136,1.000);transform-origin:0 0;-webkit-text-stroke:0.2px #fff">КАЗ</div>
<div class="a" style="left:766.00px;top:430.10px;font-family:'Liberation Sans';font-size:7.8px;line-height:7.8px;color:#fff;font-weight:normal;font-style:normal;transform:scale(0.7686,1.000);transform-origin:0 0;-webkit-text-stroke:0.2px #fff">12:27</div>
<div class="a" style="left:757.00px;top:440.60px;font-family:'Liberation Sans';font-size:7.8px;line-height:7.8px;color:#fff;font-weight:normal;font-style:normal;transform:scale(0.8199,1.000);transform-origin:0 0;-webkit-text-stroke:0.2px #fff">01.05.2016</div>
<svg style="left:0;top:0;pointer-events:none" width="800" height="450"><text transform="translate(285,114) rotate(-23)" font-family="Liberation Serif" font-weight="bold" font-size="48" letter-spacing="0.9" fill="rgb(222,210,210)" fill-opacity="0.32" stroke="rgb(212,180,180)" stroke-opacity="0.35" stroke-width="1.1">Stud.kz - Stud.kz</text><text transform="translate(283.5,280) rotate(-23)" font-family="Liberation Serif" font-weight="bold" font-size="48" letter-spacing="0.9" fill="rgb(222,210,210)" fill-opacity="0.32" stroke="rgb(212,180,180)" stroke-opacity="0.35" stroke-width="1.1">Stud.kz - Stud.kz</text><text transform="translate(284.5,452) rotate(-23)" font-family="Liberation Serif" font-weight="bold" font-size="48" letter-spacing="0.9" fill="rgb(222,210,210)" fill-opacity="0.32" stroke="rgb(212,180,180)" stroke-opacity="0.35" stroke-width="1.1">Stud.kz - Stud.kz</text><g transform="translate(225,120)"><g transform="rotate(-12)"><rect x="-46" y="-44" width="92" height="88" rx="14" fill="#fff" fill-opacity="0.16" stroke="rgb(200,232,236)" stroke-opacity="0.5" stroke-width="2.5"/></g><path d="M0 -23 A23 23 0 1 1 -20 11" transform="translate(19,-2)" fill="none" stroke="rgb(160,205,110)" stroke-opacity="0.5" stroke-width="2.4"/><path d="M-19.5 -29 Q-8 -20 -2 -11 Q2 -17 9 -16 L26 -12 L11 -11 Q7 2 1 19 Q-4 4 -6 -3 Q-8 -14 -19.5 -29Z" fill="rgb(215,190,120)" fill-opacity="0.5"/><path d="M-50 -8 Q-25 -10 -5 -6 L-5 -3 Q-25 -5 -50 -8Z" fill="rgb(220,160,150)" fill-opacity="0.55"/></g><g transform="translate(228,278)"><g transform="rotate(-12)"><rect x="-46" y="-44" width="92" height="88" rx="14" fill="#fff" fill-opacity="0.16" stroke="rgb(200,232,236)" stroke-opacity="0.5" stroke-width="2.5"/></g><path d="M0 -23 A23 23 0 1 1 -20 11" transform="translate(19,-2)" fill="none" stroke="rgb(160,205,110)" stroke-opacity="0.5" stroke-width="2.4"/><path d="M-19.5 -29 Q-8 -20 -2 -11 Q2 -17 9 -16 L26 -12 L11 -11 Q7 2 1 19 Q-4 4 -6 -3 Q-8 -14 -19.5 -29Z" fill="rgb(110,165,110)" fill-opacity="0.5"/><path d="M-50 -8 Q-25 -10 -5 -6 L-5 -3 Q-25 -5 -50 -8Z" fill="rgb(200,150,180)" fill-opacity="0.55"/></g><g transform="translate(255,464)"><g transform="rotate(-12)"><rect x="-46" y="-44" width="92" height="88" rx="14" fill="#fff" fill-opacity="0.16" stroke="rgb(200,232,236)" stroke-opacity="0.5" stroke-width="2.5"/></g><path d="M0 -23 A23 23 0 1 1 -20 11" transform="translate(19,-2)" fill="none" stroke="rgb(160,205,110)" stroke-opacity="0.5" stroke-width="2.4"/><path d="M-19.5 -29 Q-8 -20 -2 -11 Q2 -17 9 -16 L26 -12 L11 -11 Q7 2 1 19 Q-4 4 -6 -3 Q-8 -14 -19.5 -29Z" fill="rgb(190,180,120)" fill-opacity="0.5"/><path d="M-50 -8 Q-25 -10 -5 -6 L-5 -3 Q-25 -5 -50 -8Z" fill="rgb(210,160,150)" fill-opacity="0.55"/></g></svg>
</body></html>
